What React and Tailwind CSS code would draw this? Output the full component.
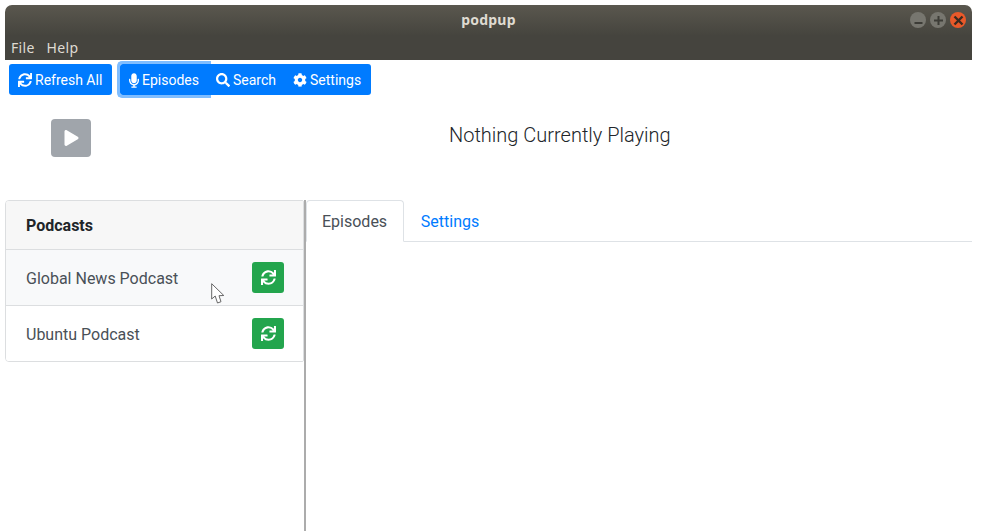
import React from "react";
import { FaSync, FaMicrophone, FaSearch, FaCog, FaPlay } from "react-icons/fa";

function ListRow({ name, hover, last }) {
  return (
    <div className={`flex items-center justify-between pl-[20px] pr-[19px] text-[16px] text-[#495057] ${hover ? "bg-[#f8f9fa]" : "bg-white"} ${last ? "h-[55px]" : "h-[56px] border-b border-[#dcdee0]"}`}>
      <span className="pt-[2px]">{name}</span>
      <button className="flex h-[31px] w-[32px] items-center justify-center rounded-[3px] bg-[#23a54d] text-white">
        <FaSync className="h-[15px] w-[15px]" />
      </button>
    </div>
  );
}

export default function App() {
  return (
    <div className="relative h-[531px] w-[981px] overflow-hidden bg-white text-[16px] text-[#212529] [font-family:Roboto,sans-serif]">
      <div className="ml-[5px] mt-[5px] w-[967px]">
        <div className="relative flex h-[31px] items-center justify-center rounded-t-[7px] bg-gradient-to-b from-[#5a574e] to-[#45443e] pb-[2px] text-[14px] font-bold tracking-[0.2px] text-[#dfdbd2] [font-family:'Noto_Sans',sans-serif]">
          <span>podpup</span>
          <div className="absolute right-[6px] top-[7px] flex gap-[4px]">
            <span className="flex h-[16px] w-[16px] items-center justify-center rounded-full bg-[#77766f] text-[#3d3c37]">
              <svg width="9" height="9" viewBox="0 0 9 9"><rect x="0.5" y="6" width="8" height="2" fill="currentColor" /></svg>
            </span>
            <span className="flex h-[16px] w-[16px] items-center justify-center rounded-full bg-[#77766f] text-[#3d3c37]">
              <svg width="9" height="9" viewBox="0 0 9 9"><path d="M3.5 0h2v3.5H9v2H5.500V9h-2V5.500H0v-2h3.500z" fill="currentColor" /></svg>
            </span>
            <span className="flex h-[16px] w-[16px] items-center justify-center rounded-full bg-[#e9592a] text-[#3a2a20]">
              <svg width="11" height="11" viewBox="0 0 11 11"><path d="M1.500 1.500l8 8M9.500 1.500l-8 8" stroke="currentColor" strokeWidth="2.400" /></svg>
            </span>
          </div>
        </div>
        <div className="flex h-[24px] items-center gap-[12px] bg-[#45443e] pb-[2px] pl-[6px] text-[14px] tracking-[0.3px] text-[#dfdbd2] [font-family:'Noto_Sans',sans-serif]">
          <span>File</span>
          <span>Help</span>
        </div>
      </div>

      <div className="ml-[9px] mt-[4px] flex h-[31px] items-center text-[14px] text-white">
        <button className="flex h-[31px] w-[103px] items-center gap-[3px] rounded-[3px] bg-[#007bff] pl-[9px] pt-[1px]">
          <FaSync className="h-[14px] w-[14px]" />
          <span className="pt-[1px]">Refresh All</span>
        </button>
        <div className="relative ml-[8px] flex h-[31px] w-[251px] rounded-[3px] bg-[#007bff]">
          <span className="absolute left-[-3px] top-[-3px] h-[37px] w-[94px] rounded-l-[5px] border-y-[3px] border-l-[3px] border-[#7fbdff]" />
          <button className="relative flex w-[88px] items-center gap-[3px] pl-[9px] pt-[1px]">
            <FaMicrophone className="h-[15px] w-[10px]" />
            <span className="pt-[1px]">Episodes</span>
          </button>
          <button className="flex w-[77px] items-center gap-[3px] pl-[8px] pt-[1px]">
            <FaSearch className="h-[14px] w-[14px]" />
            <span className="pt-[1px]">Search</span>
          </button>
          <button className="flex flex-1 items-center gap-[3px] pl-[8px] pt-[1px]">
            <FaCog className="h-[14px] w-[14px]" />
            <span className="pt-[1px]">Settings</span>
          </button>
        </div>
      </div>

      <div className="flex h-[105px] items-start">
        <button className="ml-[51px] mt-[24px] flex h-[38px] w-[40px] items-center justify-center rounded-[4px] bg-[#a0a5ab] text-white">
          <FaPlay className="h-[16px] w-[15px]" />
        </button>
        <div className="ml-[358px] mt-[28px] text-[20px] font-light leading-[24px] text-[#212529]">Nothing Currently Playing</div>
      </div>

      <div className="flex h-[331px]">
        <div className="ml-[5px] w-[299px]">
          <div className="overflow-hidden rounded-l-[4px] rounded-r-[2px] border border-[#dcdee0]">
            <div className="flex h-[49px] items-center border-b border-[#dcdee0] bg-[#f7f7f7] pl-[20px] pt-[2px] font-bold">Podcasts</div>
            <ListRow name="Global News Podcast" hover />
            <ListRow name="Ubuntu Podcast" last />
          </div>
        </div>
        <div className="w-[2px] bg-[#acacac]" />
        <div className="flex h-[42px] w-[666px] border-b border-[#dee2e6]">
          <div className="mb-[-1px] flex h-[42px] w-[98px] items-center rounded-t-[4px] border border-[#dee2e6] border-b-white bg-white pl-[15px] pt-[2px] text-[#495057]">Episodes</div>
          <div className="flex h-[41px] w-[92px] items-center justify-center pt-[2px] text-[#007bff]">Settings</div>
        </div>
      </div>

      <svg className="absolute left-[211px] top-[283px]" width="14" height="22" viewBox="0 0 14 22">
        <path d="M0.700 0.700V16L4.200 13L6.500 20L10 18.700L8 12.700L12.800 12.500Z" fill="#fff" stroke="#666" strokeWidth="1" strokeLinejoin="round" />
      </svg>
    </div>
  );
}
